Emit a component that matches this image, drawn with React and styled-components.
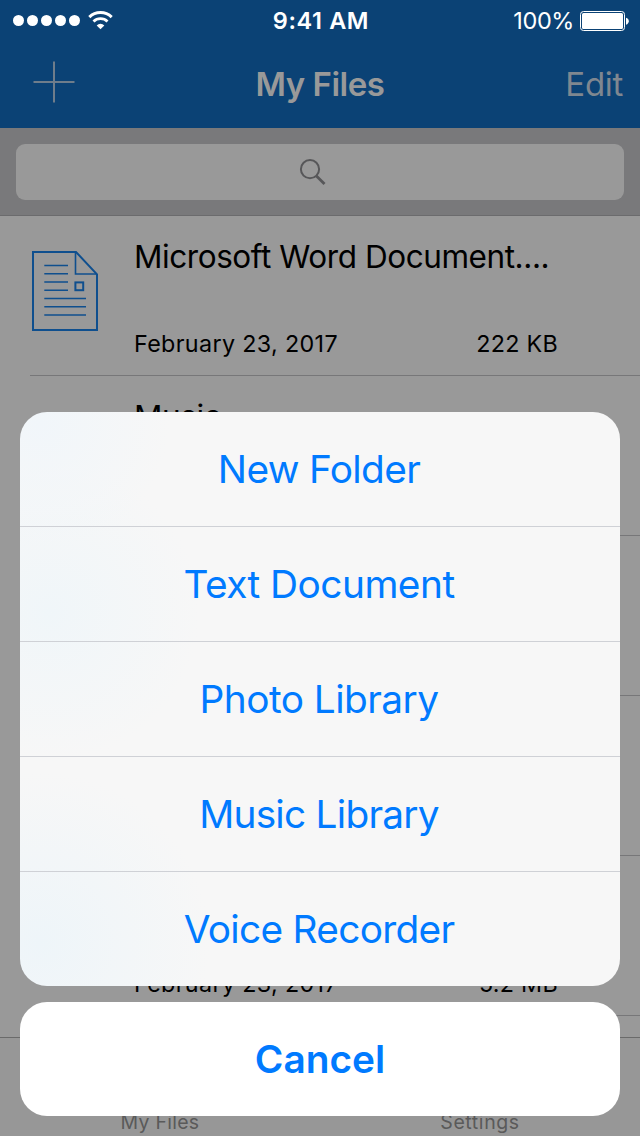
import React from "react";
import styled, { createGlobalStyle } from "styled-components";

const GlobalStyle = createGlobalStyle`
  * {
    box-sizing: border-box;
  }

  body {
    margin: 0;
    background: #999999;
    font-family: Inter, "Liberation Sans", sans-serif;
  }
`;

const Screen = styled.div`
  width: 640px;
  height: 1136px;
  position: relative;
  overflow: hidden;
  display: flex;
  flex-direction: column;
  background: #999999;
`;

const Header = styled.header`
  flex: none;
  height: 128px;
  background: #0b4275;
`;

const Text = styled.span`
  font-size: ${(props) => props.$size}px;
  line-height: ${(props) => props.$line || 40}px;
  font-weight: ${(props) => props.$weight || 400};
  letter-spacing: ${(props) => props.$track || 0}px;
  color: ${(props) => props.$color || "#000"};
  white-space: nowrap;
`;

const StatusBar = styled.div`
  height: 41px;
  display: grid;
  grid-template-columns: 1fr auto 1fr;
  align-items: center;
  padding: 1px 11px 0 13px;
`;

const Signal = styled.div`
  display: flex;
  align-items: center;
  gap: 3px;
  padding-bottom: 1px;
  svg {
    margin-left: 5px;
  }
`;

const Dot = styled.i`
  width: 11px;
  height: 11px;
  border-radius: 50%;
  background: #fff;
`;

const Power = styled.div`
  display: flex;
  align-items: center;
  justify-content: flex-end;
  gap: 6px;
  svg {
    margin-bottom: 1px;
  }
`;

const NavBar = styled.nav`
  height: 87px;
  display: grid;
  grid-template-columns: 1fr auto 1fr;
  align-items: center;
  padding: 0 17px 1px 17px;
`;

const AddButton = styled.div`
  display: flex;
  padding: 0 0 4px 16px;
`;

const EditButton = styled.div`
  text-align: right;
`;

const SearchBar = styled.div`
  flex: none;
  height: 88px;
  padding: 16px 16px 15px;
  background: #79797b;
  border-bottom: 1px solid #6b6b6d;
`;

const SearchField = styled.div`
  height: 56px;
  border-radius: 9px;
  background: #999999;
  display: flex;
  align-items: center;
  justify-content: center;
  padding: 1px 14px 0 0;
`;

const FileList = styled.main`
  flex: 1;
  min-height: 0;
  overflow: hidden;
`;

const FileRow = styled.div`
  height: 160px;
  margin-left: 30px;
  display: flex;
  border-bottom: 1px solid #777779;
`;

const FileIcon = styled.div`
  width: 104px;
  padding: 34px 0 0 1px;
`;

const FileInfo = styled.div`
  width: 424px;
  height: 148px;
  display: flex;
  flex-direction: column;
  justify-content: space-between;
  padding-top: 21px;
`;

const FileMeta = styled.div`
  display: flex;
  justify-content: space-between;
`;

const TabBar = styled.footer`
  flex: none;
  height: 99px;
  border-top: 1px solid #6a6a6a;
  background: #979797;
  display: grid;
  grid-template-columns: 1fr 1fr;
  align-items: end;
  justify-items: center;
`;

const ActionSheet = styled.div`
  position: absolute;
  left: 20px;
  right: 20px;
  bottom: 20px;
  display: flex;
  flex-direction: column;
  gap: 16px;
`;

const ActionGroup = styled.div`
  height: 574px;
  border-radius: 27px;
  overflow: hidden;
  background: radial-gradient(circle at 20px 10px, #f1f6fa, transparent 130px),
    radial-gradient(circle at 30px 200px, #f0f6f9, transparent 150px),
    radial-gradient(circle at 20px 530px, #eef5f9, transparent 170px), #f7f7f7;
`;

const Action = styled.div`
  height: 115px;
  display: flex;
  align-items: center;
  justify-content: center;
  padding-right: 2px;
  border-bottom: 1px solid #cfd1d6;
  &:last-child {
    height: 114px;
    border-bottom: none;
  }
`;

const CancelButton = styled.div`
  height: 114px;
  border-radius: 27px;
  background: #fff;
  display: flex;
  align-items: center;
  justify-content: center;
`;

const WifiIcon = () => (
  <svg width="25" height="19" viewBox="0 0 25 19" fill="none" stroke="#fff">
    <path d="M1.3 6.1a16 16 0 0 1 22.4 0" strokeWidth="3" />
    <path d="M5.5 10.6a9.9 9.9 0 0 1 14 0" strokeWidth="2.8" />
    <path d="M8.7 14.4a5.4 5.4 0 0 1 7.6 0L12.5 18.3z" fill="#fff" stroke="none" />
  </svg>
);

const BatteryIcon = () => (
  <svg width="49" height="20" viewBox="0 0 49 20">
    <rect x="0.5" y="0.5" width="44" height="19" rx="3" fill="none" stroke="#fff" />
    <rect x="2" y="2" width="41" height="16" rx="1.5" fill="#fff" />
    <path d="M46 6.8c3.7 1 3.7 5.9 0 6.9z" fill="#fff" />
  </svg>
);

const PlusIcon = () => (
  <svg width="42" height="42" viewBox="0 0 42 42" stroke="#6f7d8b" strokeWidth="2">
    <path d="M21 0.5v41M0.5 21h41" />
  </svg>
);

const SearchIcon = () => (
  <svg width="28" height="28" viewBox="0 0 28 28" fill="none" stroke="#575759">
    <circle cx="11" cy="10.2" r="9.1" strokeWidth="2" />
    <path d="M17.2 16.8l8.3 8.3" strokeWidth="2.8" />
  </svg>
);

const DocumentIcon = () => (
  <svg width="68" height="82" viewBox="0 0 68 82" fill="none" stroke="#0f4f8e">
    <path d="M2 2h43l21 22.3V80H2z" strokeWidth="2" />
    <path d="M44.5 2v22h21.5" strokeWidth="1.6" />
    <path
      d="M13.3 15.4H37M13.3 23.7H37M13.3 32H37M13.3 40.3H37M13.3 48.4H55M13.3 56.7H55M13.3 65H55"
      strokeWidth="1.5"
    />
    <rect x="44.4" y="32.4" width="7.8" height="7.8" strokeWidth="2" />
  </svg>
);

const files = [
  { name: "Microsoft Word Document....", date: "February 23, 2017", size: "222 KB", icon: true },
  { name: "Music" },
  {},
  {},
  { date: "February 23, 2017", size: "5.2 MB" },
];

const actions = [
  { label: "New Folder", track: -0.65 },
  { label: "Text Document", track: -0.52 },
  { label: "Photo Library", track: -0.55 },
  { label: "Music Library", track: -0.75 },
  { label: "Voice Recorder", track: -0.7 },
];

const App = () => {
  return (
    <>
      <GlobalStyle />
      <Screen>
        <Header>
          <StatusBar>
            <Signal>
              {[0, 1, 2, 3, 4].map((n) => (
                <Dot key={n} />
              ))}
              <WifiIcon />
            </Signal>
            <Text $size={23.5} $weight={600} $track={0.6} $color="#fff">
              9:41 AM
            </Text>
            <Power>
              <Text $size={23.5} $track={-0.4} $color="#fff">
                100%
              </Text>
              <BatteryIcon />
            </Power>
          </StatusBar>
          <NavBar>
            <AddButton>
              <PlusIcon />
            </AddButton>
            <Text $size={33} $weight={600} $track={-0.5} $color="#999">
              My Files
            </Text>
            <EditButton>
              <Text $size={33} $track={-0.3} $color="#7f8790">
                Edit
              </Text>
            </EditButton>
          </NavBar>
        </Header>
        <SearchBar>
          <SearchField>
            <SearchIcon />
          </SearchField>
        </SearchBar>
        <FileList>
          {files.map((file, i) => (
            <FileRow key={i}>
              <FileIcon>{file.icon && <DocumentIcon />}</FileIcon>
              <FileInfo>
                <Text $size={31.5} $track={-0.43}>
                  {file.name}
                </Text>
                <FileMeta>
                  <Text $size={23.3} $track={0.35}>
                    {file.date}
                  </Text>
                  <Text $size={23.3} $track={0.3}>
                    {file.size}
                  </Text>
                </FileMeta>
              </FileInfo>
            </FileRow>
          ))}
        </FileList>
        <TabBar>
          <Text $size={19.5} $line={28} $color="#5a5a5a" $track={0.25}>
            My Files
          </Text>
          <Text $size={19.5} $line={28} $color="#5a5a5a" $track={0.6}>
            Settings
          </Text>
        </TabBar>
        <ActionSheet>
          <ActionGroup>
            {actions.map((action) => (
              <Action key={action.label}>
                <Text $size={38.8} $line={48} $track={action.track} $color="#007aff">
                  {action.label}
                </Text>
              </Action>
            ))}
          </ActionGroup>
          <CancelButton>
            <Text $size={38.8} $line={48} $weight={600} $color="#007aff">
              Cancel
            </Text>
          </CancelButton>
        </ActionSheet>
      </Screen>
    </>
  );
};

export default App;
